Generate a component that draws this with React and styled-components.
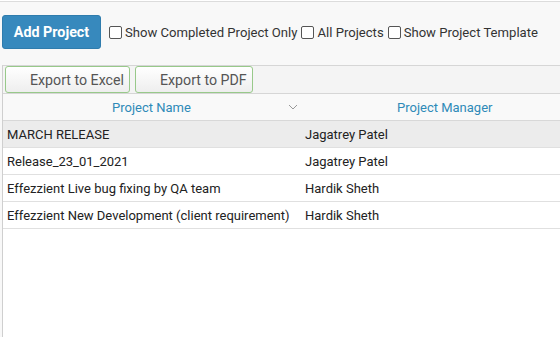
import React from "react";
import styled, { createGlobalStyle } from "styled-components";

const Global = createGlobalStyle`
  html, body { margin: 0; padding: 0; background: #f8f8f8; }
  body { font-family: Roboto, "Liberation Sans", sans-serif; color: #333; }
`;

const Page = styled.div`
  width: 560px;
  height: 337px;
  overflow: hidden;
  background: #f8f8f8;
  border-top: 1px solid #fff;
  box-sizing: border-box;
`;

const TopLine = styled.div`
  height: 1px;
  background: #dcdcdc;
`;

const ActionBar = styled.div`
  display: flex;
  align-items: center;
  padding: 13px 0 0 2px;
  height: 34px;
`;

const PrimaryButton = styled.button`
  width: 99px;
  height: 34px;
  background: #3789bd;
  border: 1px solid #2f7cad;
  border-radius: 3px;
  color: #fff;
  font-family: Roboto, "Liberation Sans", sans-serif;
  font-weight: 700;
  font-size: 14.3px;
  padding: 0;
  margin-right: 7px;
`;

const CheckLabel = styled.label`
  display: inline-flex;
  align-items: center;
  font-size: 13.1px;
  color: #333;
  margin-right: 3px;
  white-space: nowrap;
`;

const Box = styled.span`
  display: inline-block;
  width: 11px;
  height: 11px;
  border: 1px solid #555;
  border-radius: 2px;
  background: #fff;
  margin: 0 3px 0 1px;
`;

const Grid = styled.div`
  margin: 16px 0 0 2px;
  border-left: 1px solid #cfcfcf;
  border-top: 1px solid #d6d6d6;
  background: #fff;
  height: 300px;
`;

const Toolbar = styled.div`
  display: flex;
  gap: 5px;
  padding: 0 0 0 2px;
  height: 27px;
  background: #f4f4f4;
  border-bottom: 1px solid #d6d6d6;
`;

const ExportButton = styled.button`
  height: 27px;
  width: ${p => p.$w}px;
  border: 1px solid #98c98a;
  border-radius: 3px;
  background: linear-gradient(#ffffff, #eeeeee);
  color: #555;
  font-family: Roboto, "Liberation Sans", sans-serif;
  font-size: 14.2px;
  padding: 0 0 0 ${p => p.$pl}px;
  text-align: left;
`;

const Row = styled.div`
  display: grid;
  grid-template-columns: 297px 1fr;
  height: 26px;
  align-items: center;
  border-bottom: 1px solid #e0e0e0;
  background: ${p => (p.$selected ? "#ececec" : "#fff")};
  font-size: 13px;
  color: #222;
`;

const HeaderRow = styled(Row)`
  background: #f9f9f9;
  border-bottom: 1px solid #d8d8d8;
`;

const HeadCell = styled.div`
  position: relative;
  text-align: ${p => (p.$left ? "left" : "center")};
  color: #2e8ab8;
  font-size: 13px;
  padding-left: ${p => p.$pl || 0}px;
  white-space: nowrap;
`;

const Chevron = styled.svg`
  position: absolute;
  right: 2px;
  top: 50%;
  margin-top: -3px;
`;

const Cell = styled.div`
  padding-left: ${p => p.$pl}px;
  white-space: nowrap;
  overflow: hidden;
`;

const rows = [
  ["MARCH RELEASE", "Jagatrey Patel"],
  ["Release_23_01_2021", "Jagatrey Patel"],
  ["Effezzient Live bug fixing by QA team", "Hardik Sheth"],
  ["Effezzient New Development (client requirement)", "Hardik Sheth"],
];

export default function App() {
  return (
    <>
      <Global />
      <Page>
        <TopLine />
        <ActionBar>
          <PrimaryButton>Add Project</PrimaryButton>
          <CheckLabel><Box />Show Completed Project Only</CheckLabel>
          <CheckLabel><Box />All Projects</CheckLabel>
          <CheckLabel><Box />Show Project Template</CheckLabel>
        </ActionBar>
        <Grid>
          <Toolbar>
            <ExportButton $w={125} $pl={24}>Export to Excel</ExportButton>
            <ExportButton $w={118} $pl={24}>Export to PDF</ExportButton>
          </Toolbar>
          <HeaderRow>
            <HeadCell>
              Project Name
              <Chevron width="10" height="6" viewBox="0 0 10 6">
                <path d="M1 1 L5 5 L9 1" fill="none" stroke="#999" strokeWidth="1" />
              </Chevron>
            </HeadCell>
            <HeadCell $left $pl={97}>Project Manager</HeadCell>
          </HeaderRow>
          {rows.map((r, i) => (
            <Row key={i} $selected={i === 0}>
              <Cell $pl={4}>{r[0]}</Cell>
              <Cell $pl={5}>{r[1]}</Cell>
            </Row>
          ))}
        </Grid>
      </Page>
    </>
  );
}
